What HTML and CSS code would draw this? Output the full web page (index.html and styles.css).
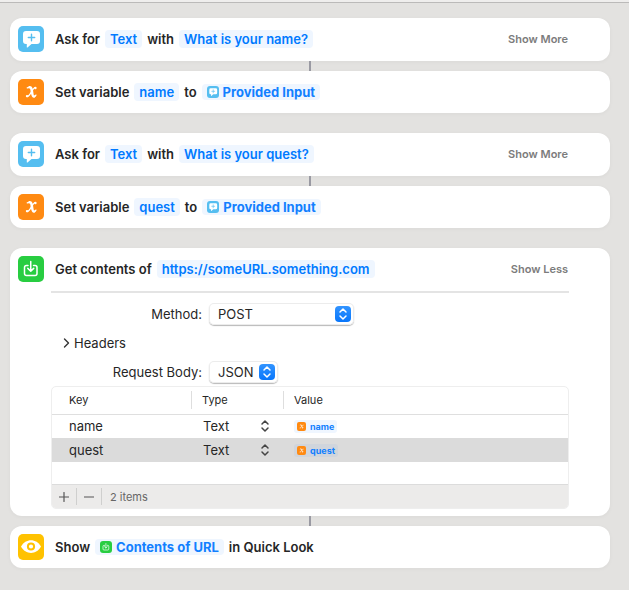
FILE: index.html
```html
<!DOCTYPE html>
<html lang="en">
<head>
<meta charset="utf-8">
<meta name="viewport" content="width=device-width, initial-scale=1">
<title>Shortcut editor</title>
<link rel="stylesheet" href="styles.css">
</head>
<body>
<svg class="defs" aria-hidden="true">
  <symbol id="ask" viewBox="0 0 26 26">
    <path fill="#fff" d="M8 5h11a3 3 0 0 1 3 3v7a3 3 0 0 1-3 3h-5.500l-4 3.400q-.7.500-.7-.4V18H8a3 3 0 0 1-3-3V8a3 3 0 0 1 3-3z"/>
    <path stroke="#55bef0" stroke-width="1.400" stroke-linecap="round" d="M13.500 8.300v6.400M10.300 11.500h6.400"/>
  </symbol>
  <symbol id="variable" viewBox="0 0 26 26">
    <g fill="none" stroke="#fff" stroke-linecap="round">
      <path stroke-width="2.500" d="M11.500 8.300c3.400-.8 1.700 9.400 4.500 9.300"/>
      <path stroke-width="1.300" d="M9.300 8.900c.6-.4 1.200-.6 1.900-.6M16 17.600c.9 0 1.500-.7 1.900-1.500M17.300 8.700c-2.700-.7-5.100 9.200-8.200 8.800"/>
    </g>
    <circle cx="17.400" cy="9" r="1.200" fill="#fff"/>
    <circle cx="9" cy="17.100" r="1.200" fill="#fff"/>
  </symbol>
  <symbol id="download" viewBox="0 0 26 26">
    <path fill="none" stroke="#fff" stroke-width="1.500" stroke-linecap="round" stroke-linejoin="round" d="M10 9.500H8.500a2 2 0 0 0-2 2v6a2 2 0 0 0 2 2h8.500a2 2 0 0 0 2-2v-6a2 2 0 0 0-2-2h-1.500M12.750 5.500v9.500M9.800 12.400l2.950 2.900 2.950-2.900"/>
  </symbol>
  <symbol id="eye" viewBox="0 0 26 26">
    <path fill="#fff" d="M3 12.500C7.500 4 18.500 4 23 12.500 18.500 21 7.500 21 3 12.500z"/>
    <circle cx="13" cy="12.500" r="3.100" fill="none" stroke="#ffc200" stroke-width="2"/>
  </symbol>
  <symbol id="updown" viewBox="0 0 10 14">
    <path fill="none" stroke="currentColor" stroke-width="1.500" stroke-linecap="round" stroke-linejoin="round" d="M2 5l3-3 3 3M2 9l3 3 3-3"/>
  </symbol>
</svg>
<div class="toolbar-edge"></div>
<main class="workflow">
  <section class="card card-tall">
    <div class="action">
      <span class="icon blue"><svg><use href="#ask"/></svg></span>
      <div class="phrase"><span>Ask for</span><button class="token">Text</button><span>with</span><button class="token">What is your name?</button></div>
      <button class="toggle">Show More</button>
    </div>
  </section>
  <div class="connector"></div>
  <section class="card">
    <div class="action">
      <span class="icon orange"><svg><use href="#variable"/></svg></span>
      <div class="phrase"><span>Set variable</span><button class="token">name</button><span>to</span><button class="token magic"><span class="mini blue"><svg><use href="#ask"/></svg></span>Provided Input</button></div>
    </div>
  </section>
  <div class="spacer"></div>
  <section class="card card-tall">
    <div class="action">
      <span class="icon blue"><svg><use href="#ask"/></svg></span>
      <div class="phrase"><span>Ask for</span><button class="token">Text</button><span>with</span><button class="token">What is your quest?</button></div>
      <button class="toggle">Show More</button>
    </div>
  </section>
  <div class="connector"></div>
  <section class="card">
    <div class="action">
      <span class="icon orange"><svg><use href="#variable"/></svg></span>
      <div class="phrase"><span>Set variable</span><button class="token">quest</button><span>to</span><button class="token magic"><span class="mini blue"><svg><use href="#ask"/></svg></span>Provided Input</button></div>
    </div>
  </section>
  <div class="spacer"></div>
  <section class="card">
    <div class="action">
      <span class="icon green"><svg><use href="#download"/></svg></span>
      <div class="phrase"><span>Get contents of</span><button class="token">https://someURL.something.com</button></div>
      <button class="toggle">Show Less</button>
    </div>
    <div class="details">
      <div class="field">
        <label for="method">Method:</label>
        <span class="popup popup-wide"><select id="method"><option>POST</option></select><span class="stepper"><svg><use href="#updown"/></svg></span></span>
      </div>
      <button class="headers"><svg viewBox="0 0 7 10"><path d="M1.500 1l4 4-4 4"/></svg>Headers</button>
      <div class="field">
        <label for="body">Request Body:</label>
        <span class="popup"><select id="body"><option>JSON</option></select><span class="stepper"><svg><use href="#updown"/></svg></span></span>
      </div>
      <div class="editor">
        <table>
          <colgroup><col class="col-key"><col class="col-type"><col></colgroup>
          <thead><tr><th>Key</th><th><span class="divided">Type</span></th><th><span class="divided">Value</span></th></tr></thead>
          <tbody>
            <tr><td>name</td><td><span class="type"><select aria-label="Type of name"><option>Text</option></select><svg><use href="#updown"/></svg></span></td><td><button class="chip"><span class="mini orange"><svg><use href="#variable"/></svg></span>name</button></td></tr>
            <tr class="selected"><td>quest</td><td><span class="type"><select aria-label="Type of quest"><option>Text</option></select><svg><use href="#updown"/></svg></span></td><td><button class="chip"><span class="mini orange"><svg><use href="#variable"/></svg></span>quest</button></td></tr>
          </tbody>
        </table>
        <div class="footer">
          <button aria-label="Add item"><svg viewBox="0 0 10 10"><path d="M5 .5v9M.5 5h9"/></svg></button>
          <button aria-label="Remove item"><svg viewBox="0 0 10 10"><path d="M.5 5h9"/></svg></button>
          <span>2 items</span>
        </div>
      </div>
    </div>
  </section>
  <div class="connector"></div>
  <section class="card">
    <div class="action">
      <span class="icon yellow"><svg><use href="#eye"/></svg></span>
      <div class="phrase"><span>Show</span><button class="token magic"><span class="mini green"><svg><use href="#download"/></svg></span>Contents of URL</button><span>in Quick Look</span></div>
    </div>
  </section>
</main>
</body>
</html>
```
FILE: styles.css
```css
* { box-sizing: border-box; }
body {
  margin: 0;
  background: #e3e2e0;
  color: #262626;
  font: 13px/18px Inter, "Liberation Sans", sans-serif;
}
button, select { margin: 0; padding: 0; border: 0; background: none; color: inherit; font: inherit; }
select { appearance: none; }
svg { display: block; }
.defs { display: none; }
.toolbar-edge { height: 3px; background: #efeeed; border-bottom: 1px solid #bbbab9; }
.workflow { padding: 15px 19px 22px 10px; }
.card { background: #fff; border-radius: 12px; box-shadow: 0 1px 4px rgba(0, 0, 0, .04); }
.card-tall { padding-bottom: 1px; }
.connector { width: 2px; height: 10px; margin: 0 auto; background: #9a9aa3; }
.spacer { height: 20px; }

.action { display: flex; align-items: center; gap: 11px; padding: 8px 42px 8px 8px; }
.icon { flex: none; width: 26px; height: 26px; border-radius: 5px; }
.icon svg, .mini svg { width: 100%; height: 100%; }
.blue { background: #55bef0; }
.orange { background: #ff8a12; }
.green { background: #28cd41; }
.yellow { background: #ffc200; }
.phrase { flex: 1; display: flex; align-items: center; gap: 5px; font-weight: 600; white-space: nowrap; }
.token { height: 18px; padding: 0 5px; border-radius: 4px; background: #eff6ff; color: #007aff; }
.magic { display: flex; align-items: center; gap: 4px; height: 16px; line-height: 16px; color: #1280ff; font-weight: 650; }
.mini { flex: none; width: 12px; height: 12px; border-radius: 3px; }
.toggle { color: #7c7c7c; font-size: 11px; font-weight: 600; }

.details { margin: 1px 41px 0; padding: 10px 0 7px; border-top: 2px solid #e4e4e4; }
.field { display: flex; align-items: center; gap: 7px; }
.field label { width: 151px; text-align: right; }
.popup { display: grid; align-items: center; width: 69px; height: 22px; border-radius: 5px; box-shadow: 0 0 0 1px #ececec inset, 0 1px 1px rgba(0, 0, 0, .28); }
.popup-wide { width: 145px; }
.popup select, .stepper { grid-area: 1 / 1; }
.popup select { height: 20px; padding-left: 9px; }
.stepper { justify-self: end; display: grid; place-items: center; width: 16px; height: 16px; margin-right: 3px; border-radius: 4px; background: linear-gradient(#3294ff, #0876fb); color: #fff; pointer-events: none; }
.stepper svg { width: 10px; height: 14px; }
.headers { display: flex; align-items: center; gap: 4px; margin: 9px 0 9px 12px; }
.headers svg { width: 7px; height: 10px; fill: none; stroke: #333; stroke-width: 1.4; stroke-linecap: round; stroke-linejoin: round; }

.editor { margin-top: 3px; border: 1px solid #eee; border-radius: 5px; overflow: hidden; }
table { width: 100%; margin-bottom: 22px; border-collapse: collapse; table-layout: fixed; }
.col-key { width: 139px; }
.col-type { width: 92px; }
th, td { height: 24px; padding: 0; text-align: left; font-weight: 400; }
th { height: 27px; border-bottom: 1px solid #dfdfdf; font-size: 11px; }
th:first-child, td:first-child { padding-left: 17px; }
td:nth-child(2) { padding-left: 12px; }
td:nth-child(3) { padding-left: 11px; }
.divided { display: block; padding-left: 10px; border-left: 1px solid #dedede; }
.selected { background: #dbdbdb; }
.type { display: grid; align-items: center; }
.type select, .type svg { grid-area: 1 / 1; }
.type svg { justify-self: end; width: 10px; height: 14px; margin-right: 13px; color: #444; pointer-events: none; }
.chip { display: flex; align-items: center; gap: 4px; height: 13px; padding: 0 3px; border-radius: 3px; background: #eff6ff; color: #1280ff; font-size: 9px; font-weight: 650; line-height: 13px; }
.chip .mini { width: 9px; height: 9px; border-radius: 2px; }
.selected .chip { background: #d0d5dc; }
.footer { display: flex; align-items: center; height: 24px; border-top: 1px solid #dcdcdc; background: #ecebea; color: #666; font-size: 11px; }
.footer button { display: grid; place-items: center; width: 25px; height: 17px; border-right: 1px solid #cfcfce; }
.footer svg { width: 10px; height: 10px; fill: none; stroke: #555; stroke-width: 1.2; stroke-linecap: round; }
.footer span { padding-left: 8px; }
```
